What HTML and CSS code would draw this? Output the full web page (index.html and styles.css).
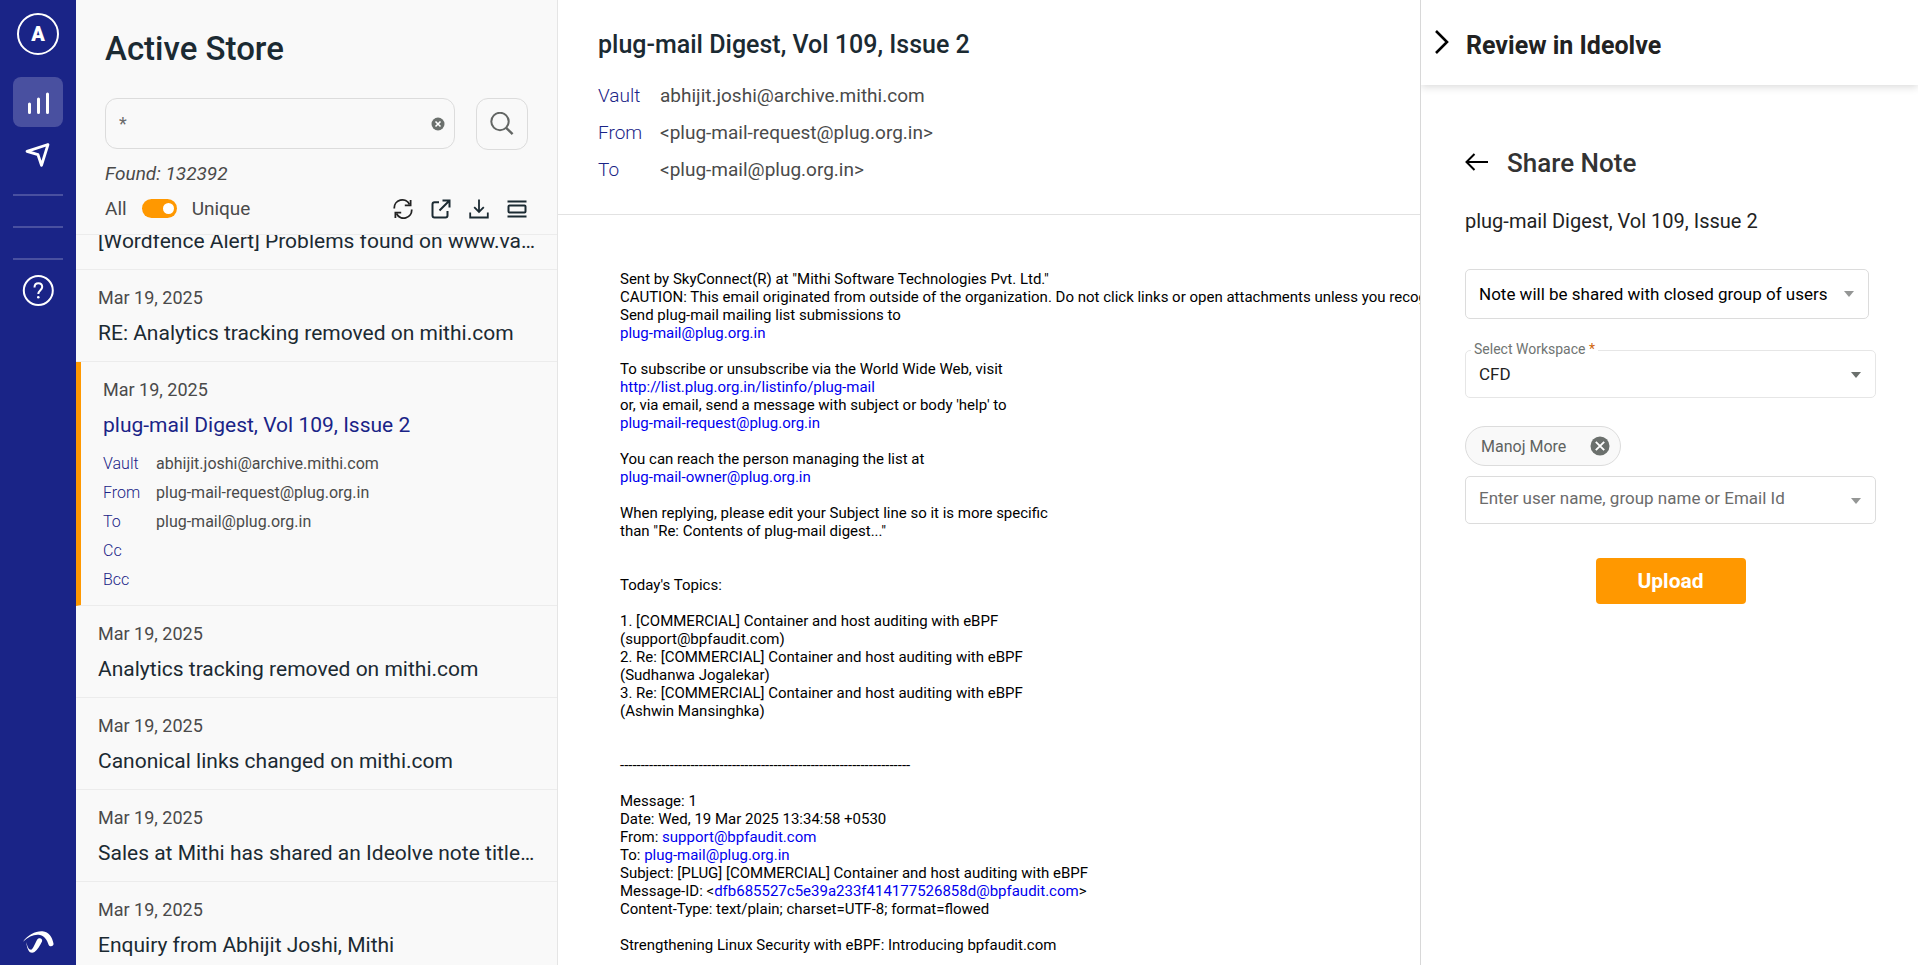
FILE: index.html
```html
<!DOCTYPE html>
<html lang="en">

<head>
    <meta charset="UTF-8">
    <meta name="viewport" content="width=device-width, initial-scale=1.0">
    <title>Active Store</title>
    <link rel="stylesheet" href="styles.css">
</head>

<body>
    <nav class="sidebar">
        <a href="#" class="avatar">A</a>
        <a href="#" class="nav-link active" aria-label="Active Store">
            <svg width="50" height="50" viewBox="0 0 50 50" fill="none" stroke="#fff" stroke-width="3" stroke-linecap="round">
                <path d="M16.500 27v8.500M25.500 22v13.500M34.500 17v18.500" />
            </svg>
        </a>
        <a href="#" class="nav-link" aria-label="Send">
            <svg width="50" height="50" viewBox="0 0 50 50" fill="none" stroke="#fff" stroke-width="2.800" stroke-linejoin="round">
                <path d="M35 17.500L14 24.300l11 3.400 3.500 10.600z" />
            </svg>
        </a>
        <hr>
        <hr>
        <hr>
        <a href="#" class="nav-help" aria-label="Help">
            <svg width="32" height="32" viewBox="0 0 32 32" fill="none" stroke="#fff" stroke-width="2">
                <circle cx="16.300" cy="15.500" r="14.500" />
                <path d="M12.500 12.500c0-2.600 1.500-4.200 3.900-4.200s3.800 1.500 3.800 3.700c0 3-3.900 3.400-3.900 7" />
                <circle cx="16.300" cy="22.300" r="1.300" fill="#fff" stroke="none" />
            </svg>
        </a>
        <a href="#" class="nav-brand" aria-label="Mithi">
            <svg width="32" height="24" viewBox="0 0 32 24" fill="#fff">
                <path d="M1 11.800C6 4.500 14 .800 20.500 1.300c6.500.700 9.800 6 11 12.200.500 3-3.800 3.800-4.900 1.200C25 10 22.500 6 18 5 12.500 4 6.500 6.500 1 11.800z" />
                <path d="M4.500 12c.800 4.800 2 7.600 4.600 7.800 2.200-.800 4.200-7 6-10 2-3 6-1.300 4.900 1.700-2 4-4.500 8.500-7.500 10.500-2 1.500-5 .800-5.800-1.200C5.300 18.300 4.400 15.300 4.500 12z" />
            </svg>
        </a>
    </nav>

    <section class="store">
        <div class="store-head">
            <h1>Active Store</h1>
            <form class="search">
                <div class="search-box">
                    <input type="text" value="*" aria-label="Search">
                    <button type="button" class="icon-btn" aria-label="Clear">
                        <svg width="14" height="14" viewBox="0 0 14 14">
                            <circle cx="7" cy="7" r="6.500" fill="#6b706d" />
                            <path d="M4.500 4.500l5 5M9.500 4.500l-5 5" stroke="#fff" stroke-width="1.600" />
                        </svg>
                    </button>
                </div>
                <button type="button" class="search-btn" aria-label="Search mails">
                    <svg width="24" height="24" viewBox="0 0 24 24" fill="none" stroke="#636664" stroke-width="2">
                        <circle cx="10" cy="9.500" r="8.700" />
                        <path d="M16.200 15.800l6.400 6.400" stroke-width="2.400" />
                    </svg>
                </button>
            </form>
            <p class="found">Found: 132392</p>
            <div class="tools">
                <span>All</span>
                <input type="checkbox" id="unique" class="switch" checked>
                <label for="unique">Unique</label>
                <div class="tool-icons">
                    <button type="button" class="icon-btn" aria-label="Refresh">
                        <svg width="20" height="20" viewBox="0 0 20 20" fill="none" stroke="#222" stroke-width="1.800">
                            <path d="M1.300 9.500A8 8 0 0 1 16.500 5.500M18.700 10.500A8 8 0 0 1 3.500 14.500" />
                            <path d="M17.600 1v5.300h-5.800M2.400 19v-5.300h5.800" />
                        </svg>
                    </button>
                    <button type="button" class="icon-btn" aria-label="Open">
                        <svg width="20" height="20" viewBox="0 0 20 20" fill="none" stroke="#1b2a32" stroke-width="2">
                            <path d="M8 3.300H3.500Q1.500 3.300 1.500 5.300V16.500Q1.500 18.500 3.500 18.500H14.500Q16.500 18.500 16.500 16.500V12M11.500 1.500H18.500V8.500M18.500 1.500L8.500 11.500" />
                        </svg>
                    </button>
                    <button type="button" class="icon-btn" aria-label="Download">
                        <svg width="20" height="20" viewBox="0 0 20 20" fill="none" stroke="#1b2a32" stroke-width="1.800">
                            <path d="M10 .500V13M5.200 8.200L10 13l4.800-4.800M1.200 13.500V18.500H18.800V13.500" />
                        </svg>
                    </button>
                    <button type="button" class="icon-btn" aria-label="View">
                        <svg width="20" height="20" viewBox="0 0 20 20" fill="none" stroke="#1b2a32" stroke-width="2">
                            <path d="M.500 2.500h19M.500 17.500h19" />
                            <rect x="1.500" y="6.500" width="17" height="7" rx="1" />
                        </svg>
                    </button>
                </div>
            </div>
        </div>

        <ul class="mail-list" id="mail-list">
            <li class="mail-item">
                <p class="date">Mar 19, 2025</p>
                <p class="subject">[Wordfence Alert] Problems found on www.vaultastic.com</p>
            </li>
            <li class="mail-item">
                <p class="date">Mar 19, 2025</p>
                <p class="subject">RE: Analytics tracking removed on mithi.com</p>
            </li>
            <li class="mail-item selected">
                <p class="date">Mar 19, 2025</p>
                <p class="subject">plug-mail Digest, Vol 109, Issue 2</p>
                <dl class="details">
                    <dt>Vault</dt>
                    <dd>abhijit.joshi@archive.mithi.com</dd>
                    <dt>From</dt>
                    <dd>plug-mail-request@plug.org.in</dd>
                    <dt>To</dt>
                    <dd>plug-mail@plug.org.in</dd>
                    <dt>Cc</dt>
                    <dd></dd>
                    <dt>Bcc</dt>
                    <dd></dd>
                </dl>
            </li>
            <li class="mail-item">
                <p class="date">Mar 19, 2025</p>
                <p class="subject">Analytics tracking removed on mithi.com</p>
            </li>
            <li class="mail-item">
                <p class="date">Mar 19, 2025</p>
                <p class="subject">Canonical links changed on mithi.com</p>
            </li>
            <li class="mail-item">
                <p class="date">Mar 19, 2025</p>
                <p class="subject">Sales at Mithi has shared an Ideolve note titled Analytics</p>
            </li>
            <li class="mail-item">
                <p class="date">Mar 19, 2025</p>
                <p class="subject">Enquiry from Abhijit Joshi, Mithi</p>
            </li>
        </ul>
    </section>

    <main class="mail">
        <header class="mail-head">
            <h2>plug-mail Digest, Vol 109, Issue 2</h2>
            <dl class="mail-meta">
                <dt>Vault</dt>
                <dd>abhijit.joshi@archive.mithi.com</dd>
                <dt>From</dt>
                <dd>&lt;plug-mail-request@plug.org.in&gt;</dd>
                <dt>To</dt>
                <dd>&lt;plug-mail@plug.org.in&gt;</dd>
            </dl>
        </header>
        <div class="mail-body">Sent by SkyConnect(R) at "Mithi Software Technologies Pvt. Ltd."
CAUTION: This email originated from outside of the organization. Do not click links or open attachments unless you recognize the sender
Send plug-mail mailing list submissions to
<a href="#">plug-mail@plug.org.in</a>

To subscribe or unsubscribe via the World Wide Web, visit
<a href="#">http://list.plug.org.in/listinfo/plug-mail</a>
or, via email, send a message with subject or body 'help' to
<a href="#">plug-mail-request@plug.org.in</a>

You can reach the person managing the list at
<a href="#">plug-mail-owner@plug.org.in</a>

When replying, please edit your Subject line so it is more specific
than "Re: Contents of plug-mail digest..."


Today's Topics:

1. [COMMERCIAL] Container and host auditing with eBPF
(support@bpfaudit.com)
2. Re: [COMMERCIAL] Container and host auditing with eBPF
(Sudhanwa Jogalekar)
3. Re: [COMMERCIAL] Container and host auditing with eBPF
(Ashwin Mansinghka)


----------------------------------------------------------------------

Message: 1
Date: Wed, 19 Mar 2025 13:34:58 +0530
From: <a href="#">support@bpfaudit.com</a>
To: <a href="#">plug-mail@plug.org.in</a>
Subject: [PLUG] [COMMERCIAL] Container and host auditing with eBPF
Message-ID: &lt;<a href="#">dfb685527c5e39a233f414177526858d@bpfaudit.com</a>&gt;
Content-Type: text/plain; charset=UTF-8; format=flowed

Strengthening Linux Security with eBPF: Introducing bpfaudit.com</div>
    </main>

    <aside class="review">
        <header class="review-head">
            <button type="button" class="icon-btn" aria-label="Collapse">
                <svg width="16" height="26" viewBox="0 0 16 26" fill="none" stroke="#000" stroke-width="2.600">
                    <path d="M2 1l11 11L2 23" />
                </svg>
            </button>
            <h2>Review in Ideolve</h2>
        </header>
        <form class="share">
            <div class="share-title">
                <button type="button" class="icon-btn" aria-label="Back">
                    <svg width="24" height="20" viewBox="0 0 24 20" fill="none" stroke="#000" stroke-width="2">
                        <path d="M23 9H2M9.500 1L1.500 9l8 8" />
                    </svg>
                </button>
                <h3>Share Note</h3>
            </div>
            <p class="note-name">plug-mail Digest, Vol 109, Issue 2</p>

            <div class="field field-scope">
                <select aria-label="Sharing">
                    <option>Note will be shared with closed group of users</option>
                </select>
                <svg class="arrow" width="10" height="6" viewBox="0 0 10 6" fill="#949695"><path d="M0 0h10L5 6z" /></svg>
            </div>

            <div class="field field-workspace">
                <label for="workspace">Select Workspace <b>*</b></label>
                <select id="workspace">
                    <option>CFD</option>
                </select>
                <svg class="arrow" width="10" height="6" viewBox="0 0 10 6" fill="#6b706d"><path d="M0 0h10L5 6z" /></svg>
            </div>

            <div class="chip">
                <span>Manoj More</span>
                <button type="button" class="icon-btn" aria-label="Remove Manoj More">
                    <svg width="20" height="20" viewBox="0 0 20 20">
                        <circle cx="10" cy="10" r="9.500" fill="#6b706d" />
                        <path d="M5.800 5.800l8.400 8.400M14.200 5.800l-8.400 8.400" stroke="#fff" stroke-width="1.900" />
                    </svg>
                </button>
            </div>

            <div class="field">
                <input type="text" placeholder="Enter user name, group name or Email Id" aria-label="Users">
                <svg class="arrow" width="10" height="6" viewBox="0 0 10 6" fill="#949695"><path d="M0 0h10L5 6z" /></svg>
            </div>

            <button type="button" class="upload">Upload</button>
        </form>
    </aside>

    <script>
        document.getElementById('mail-list').scrollTop = 57;
    </script>
</body>

</html>
```

FILE: styles.css
```css
* {
    margin: 0;
    padding: 0;
    box-sizing: border-box;
    font-family: Roboto, 'Liberation Sans', sans-serif;
}

body {
    display: flex;
    height: 100vh;
    overflow: hidden;
    background-color: #fff;
    color: #1b2a32;
}

a {
    text-decoration: none;
}

ul {
    list-style: none;
}

svg {
    display: block;
}

.icon-btn {
    background: none;
    border: none;
    cursor: pointer;
}

/* sidebar */
.sidebar {
    display: flex;
    flex-direction: column;
    align-items: center;
    flex-shrink: 0;
    width: 76px;
    padding: 13px 0 11px;
    background-color: #1a2487;
}

.avatar {
    width: 42px;
    height: 42px;
    margin-bottom: 22px;
    border: 2px solid #fff;
    border-radius: 50%;
    color: #fff;
    font-size: 20px;
    font-weight: 900;
    line-height: 38px;
    text-align: center;
}

.nav-link {
    border-radius: 8px;
}

.nav-link.active {
    background-color: #4950a0;
}

.sidebar hr {
    width: 50px;
    margin-top: 30px;
    border: none;
    border-top: 2px solid #4950a0;
}

.sidebar .nav-link + hr {
    margin-top: 17px;
}

.nav-help {
    margin-top: 15px;
}

.nav-brand {
    margin-top: auto;
}

/* mail list */
.store {
    display: flex;
    flex-direction: column;
    flex-shrink: 0;
    width: 482px;
    background-color: #f9f9f9;
    border-right: 1px solid #e5e5e5;
}

.store-head {
    padding: 30px 29px 0;
    border-bottom: 1px solid #ececec;
}

.store-head h1 {
    margin-bottom: 30px;
    font-size: 33px;
    font-weight: 500;
    line-height: 38px;
}

.search {
    display: flex;
    gap: 21px;
}

.search-box {
    display: flex;
    align-items: center;
    flex: 1;
    min-width: 0;
    height: 51px;
    padding: 0 9px 0 13px;
    border: 1px solid #dcdcdc;
    border-radius: 12px;
}

.search-box input {
    flex: 1;
    min-width: 0;
    background: none;
    border: none;
    outline: none;
    color: #6b6b6b;
    font-size: 18px;
}

.search-btn {
    display: flex;
    align-items: center;
    justify-content: center;
    width: 52px;
    height: 52px;
    background: none;
    border: 1px solid #dcdcdc;
    border-radius: 12px;
}

.found {
    margin-top: 13px;
    color: #4a4a4a;
    font-size: 19px;
    font-style: italic;
    line-height: 22px;
}

.tools {
    display: flex;
    align-items: center;
    height: 49px;
    gap: 15px;
    padding: 0 1px 2px 0;
    color: #4a4a4a;
    font-size: 19px;
}

.switch {
    appearance: none;
    width: 35px;
    height: 19px;
    padding: 4px 3px;
    border-radius: 10px;
    background-color: #ccc;
}

.switch::before {
    content: "";
    display: block;
    width: 11px;
    height: 11px;
    border-radius: 50%;
    background-color: #fff;
}

.switch:checked {
    background-color: #ff9800;
}

.switch:checked::before {
    margin-left: auto;
}

.tool-icons {
    display: flex;
    gap: 18px;
    margin-left: auto;
}

.mail-list {
    flex: 1;
    min-height: 0;
    overflow-y: auto;
    scrollbar-width: none;
}

.mail-item {
    padding: 18px 22px 16px;
    border-bottom: 1px solid #ececec;
}

.mail-item.selected {
    padding-bottom: 11px;
    border-left: 5px solid #ff9800;
}

.date {
    color: #4a4a4a;
    font-size: 18px;
    line-height: 20px;
}

.subject {
    margin-top: 13px;
    overflow: hidden;
    font-size: 21px;
    line-height: 24px;
    text-overflow: ellipsis;
    white-space: nowrap;
}

.selected .subject {
    color: #1a2487;
}

.details,
.mail-meta {
    display: grid;
    color: #4a4a4a;
}

.details {
    grid-template-columns: 53px 1fr;
    grid-auto-rows: 29px;
    margin-top: 12px;
    font-size: 16px;
    line-height: 29px;
}

dt {
    color: #1a2487;
    font-weight: 300;
}

/* opened mail */
.mail {
    display: flex;
    flex-direction: column;
    flex: 1;
    min-width: 0;
}

.mail-head {
    padding: 31px 40px 26px;
    border-bottom: 1px solid #e2e2e2;
}

.mail-head h2 {
    margin-bottom: 18px;
    font-size: 25px;
    font-weight: 500;
    line-height: 28px;
}

.mail-meta {
    grid-template-columns: 62px 1fr;
    font-size: 19px;
    line-height: 37px;
}

.mail-body {
    flex: 1;
    min-height: 0;
    padding: 55px 0 0 62px;
    overflow: hidden;
    color: #000;
    font-size: 15px;
    line-height: 18px;
    white-space: pre;
}

.mail-body a {
    color: #0000ee;
}

/* review panel */
.review {
    flex-shrink: 0;
    width: 498px;
    border-left: 1px solid #d8d8d8;
    color: #222;
}

.review-head {
    display: flex;
    align-items: center;
    gap: 16px;
    height: 85px;
    padding: 6px 13px 0;
    box-shadow: 0 2px 8px rgba(0, 0, 0, 0.15);
    clip-path: inset(0 0 -12px 0);
}

.review-head .icon-btn {
    padding-bottom: 6px;
}

.review-head h2 {
    font-size: 25px;
    font-weight: 700;
}

.share {
    display: flex;
    flex-direction: column;
    padding: 63px 42px 0 44px;
}

.share-title {
    display: flex;
    align-items: center;
    gap: 18px;
    line-height: 30px;
}

.share-title h3 {
    color: #333;
    font-size: 26px;
    font-weight: 500;
}

.note-name {
    margin: 31px 0 36px;
    font-size: 20px;
    line-height: 24px;
}

.field {
    position: relative;
    height: 48px;
}

.field select,
.field input {
    width: 100%;
    height: 100%;
    padding: 0 13px;
    appearance: none;
    background: #fff;
    border: 1px solid #dcdcdc;
    border-radius: 5px;
    outline: none;
    color: #222;
    font-size: 17px;
}

.field input {
    padding-bottom: 4px;
}

.field input::placeholder {
    color: #6b6b6b;
}

.field .arrow {
    position: absolute;
    top: 22px;
    right: 15px;
}

.field-scope {
    height: 50px;
    margin-right: 7px;
}

.field-scope select {
    color: #000;
}

.field-workspace {
    margin: 31px 0 28px;
}

.field-workspace select {
    border-color: #e6e6e6;
}

.field-workspace label {
    position: absolute;
    top: -10px;
    left: 6px;
    padding: 0 3px;
    background-color: #fff;
    color: #6f7472;
    font-size: 14px;
    line-height: 18px;
}

.field-workspace label b {
    color: #d0660a;
    font-weight: 400;
}

.chip {
    display: flex;
    align-items: center;
    align-self: flex-start;
    gap: 24px;
    height: 40px;
    margin-bottom: 10px;
    padding: 0 10px 0 15px;
    background-color: #f9f9f9;
    border: 1px solid #dcdcdc;
    border-radius: 20px;
    color: #5f6361;
    font-size: 16px;
}

.upload {
    align-self: center;
    width: 150px;
    height: 46px;
    margin-top: 34px;
    background-color: #ff9800;
    border: none;
    border-radius: 4px;
    color: #fff;
    cursor: pointer;
    font-size: 21px;
    font-weight: 700;
}
```
